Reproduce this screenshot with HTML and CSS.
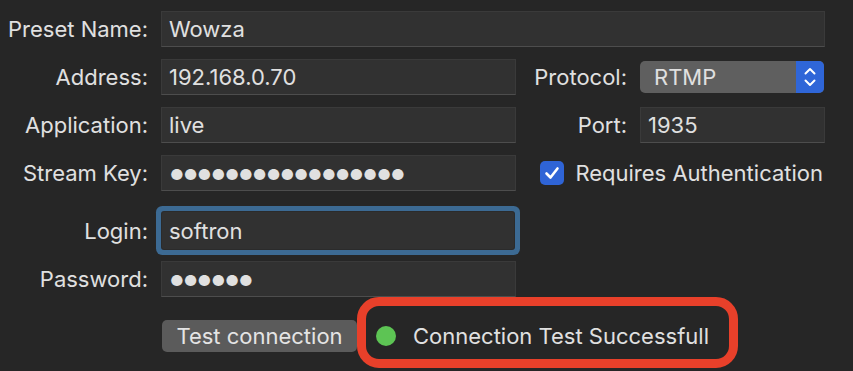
FILE: index.html
```html
<!DOCTYPE html>
<html lang="en">
<head>
  <meta charset="UTF-8">
  <meta name="viewport" content="width=device-width, initial-scale=1">
  <title>Preset</title>
  <link rel="stylesheet" href="styles.css">
</head>
<body>
  <div class="form">
    <label class="lbl">Preset Name:</label>
    <div class="field span-3">Wowza</div>

    <label class="lbl">Address:</label>
    <div class="field">192.168.0.70</div>
    <label class="lbl">Protocol:</label>
    <div class="popup">
      <span class="popup-text">RTMP</span>
      <span class="popup-arrows">
        <svg width="14" height="22" viewBox="0 0 14 22">
          <path d="M2.5 7.5 L7 3 L11.5 7.5 M2.5 14.5 L7 19 L11.5 14.5" fill="none" stroke="#fff" stroke-width="2" stroke-linecap="round" stroke-linejoin="round"/>
        </svg>
      </span>
    </div>

    <label class="lbl">Application:</label>
    <div class="field">live</div>
    <label class="lbl">Port:</label>
    <div class="field">1935</div>

    <label class="lbl">Stream Key:</label>
    <div class="field dots">●●●●●●●●●●●●●●●●●</div>
    <div class="check span-2">
      <span class="checkbox">
        <svg width="24" height="24" viewBox="0 0 24 24">
          <path d="M6.5 12.5 L10.5 16.5 L17.5 7.5" fill="none" stroke="#fff" stroke-width="2.6" stroke-linecap="round" stroke-linejoin="round"/>
        </svg>
      </span>
      <span>Requires Authentication</span>
    </div>

    <label class="lbl login-row">Login:</label>
    <div class="field focused login-row">softron</div>
    <div class="filler span-2"></div>

    <label class="lbl">Password:</label>
    <div class="field dots">●●●●●●</div>
    <div class="filler span-2"></div>

    <div class="lbl"></div>
    <div class="actions span-3">
      <button class="btn">Test connection</button>
      <div class="status">
        <span class="dot"></span>
        <span>Connection Test Successfull</span>
      </div>
    </div>
  </div>
</body>
</html>
```

FILE: styles.css
```css
/* Ventana de preset */
body {
  margin: 0;
  background-color: #262626;
  font-family: 'Inter', 'Liberation Sans', sans-serif;
  color: #e0e0e0;
  font-size: 22px;
  height: 371px;
  overflow: hidden;
}
.form {
  display: grid;
  grid-template-columns: 148px 355px 98px 185px;
  grid-template-rows: 36px 36px 36px 36px 46px 36px 71px;
  column-gap: 13px;
  row-gap: 12px;
  padding-top: 11px;
}
.span-2 {
  grid-column: span 2;
}
.span-3 {
  grid-column: span 3;
}
.lbl {
  display: flex;
  align-items: center;
  justify-content: flex-end;
  white-space: nowrap;
}
.field {
  display: flex;
  align-items: center;
  background-color: #313131;
  border: 1px solid #3a3a3a;
  border-bottom-color: #4d4d4d;
  padding-left: 7px;
  box-sizing: border-box;
  white-space: nowrap;
}
.dots {
  font-size: 15px;
  letter-spacing: 0.1px;
  padding-left: 8px;
  padding-top: 2px;
}
.focused {
  margin-left: 1px;
  margin-right: 2px;
  border: none;
  box-shadow: 0 0 0 1px #2b2b2b, 0 0 0 6px #3c6a93;
  border-radius: 2px;
  padding-left: 7px;
}
.login-row {
  align-self: end;
  height: 37px;
}
.popup {
  display: flex;
  align-self: center;
  height: 32px;
  margin-right: 1px;
  background-color: #5f5f5f;
  border-radius: 5px;
  overflow: hidden;
}
.popup-text {
  flex: 1;
  display: flex;
  align-items: center;
  padding-left: 14px;
}
.popup-arrows {
  width: 28px;
  background-color: #2f66d8;
  display: flex;
  align-items: center;
  justify-content: center;
}
.check {
  display: flex;
  align-items: center;
  justify-content: flex-end;
  gap: 11px;
  padding-right: 2px;
  white-space: nowrap;
}
.checkbox {
  width: 24px;
  height: 24px;
  background-color: #2f64d6;
  border-radius: 5px;
  display: flex;
  margin-top: -1px;
}
.actions {
  display: flex;
  align-items: flex-start;
  margin-top: -12px;
  height: 71px;
}
.btn {
  margin-top: 23px;
  margin-left: 1px;
  width: 195px;
  height: 32px;
  background-color: #5b5b5b;
  color: #e4e4e4;
  border: none;
  border-radius: 5px;
  font-family: inherit;
  font-size: 22px;
  padding: 0;
}
.status {
  display: flex;
  align-items: center;
  gap: 17px;
  height: 71px;
  box-sizing: border-box;
  border: 9px solid #e8402a;
  border-radius: 22px;
  padding: 7px 20px 0 10px;
  white-space: nowrap;
}
.dot {
  width: 20px;
  height: 20px;
  border-radius: 50%;
  background-color: #5dc454;
}
```
